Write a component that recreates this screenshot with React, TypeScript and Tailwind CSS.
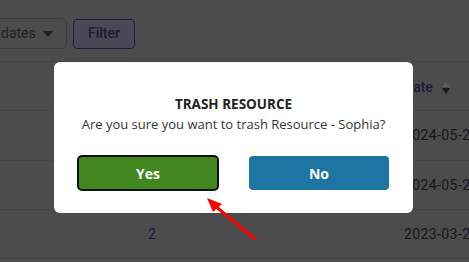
export default function App() {
  const rows = [
    { num: "", date: "2024-05-2", h: "h-[50px]" },
    { num: "", date: "2024-05-2", h: "h-[49px]" },
    { num: "2", date: "2023-03-2", h: "h-[49px]" },
    { num: "", date: "", h: "h-[49px]" },
  ];

  return (
    <div className="relative w-[469px] h-[262px] overflow-hidden bg-[#4c4c4c] font-['Roboto',sans-serif]">
      {/* page behind the overlay */}
      <div className="flex flex-col">
        <div className="flex items-center gap-[6px] pt-[18px] pb-[12px] h-[62px] border-b border-[#444444]">
          <div className="ml-[-40px] w-[107px] h-[31px] rounded-[6px] border border-[#3d3d3d] flex items-center justify-between pl-[40px] pr-[13px] text-[14px] text-[#1f1f1f]">
            <span>dates</span>
            <span className="w-0 h-0 border-l-[5px] border-r-[5px] border-t-[6px] border-l-transparent border-r-transparent border-t-[#1f1f1f]" />
          </div>
          <button className="w-[62px] h-[30px] rounded-[4px] border border-[#1c1940] bg-[#4a4856] text-[14px] font-medium text-[#1c1a33]">
            Filter
          </button>
        </div>
        <div className="relative h-[49px] border-b border-[#444444] text-[14px] font-medium text-[#1e1b3a] whitespace-nowrap">
          <span className="absolute left-[-9px] top-[15px]">s</span>
          <span className="absolute left-[404px] top-[15px] flex items-center gap-[9px]">
            Date
            <span className="flex flex-col gap-[1px]">
              <span className="w-0 h-0 border-l-[4px] border-r-[4px] border-b-[6px] border-l-transparent border-r-transparent border-b-[#5e5e5e]" />
              <span className="w-0 h-0 border-l-[4px] border-r-[4px] border-t-[6px] border-l-transparent border-r-transparent border-t-[#1a1a1a]" />
            </span>
          </span>
        </div>
        {rows.map((r, i) => (
          <div key={i} className={`relative ${r.h} border-b border-[#444444] text-[14px] tracking-[0.4px] text-[#161616] whitespace-nowrap`}>
            <span className="absolute left-[148px] top-[14px] text-[#1c1a33]">{r.num}</span>
            <span className="absolute left-[404px] top-[14px]">{r.date}</span>
          </div>
        ))}
      </div>

      {/* modal */}
      <div className="absolute left-[54px] top-[62px] w-[359px] bg-white rounded-[6px] flex flex-col items-center pt-[32px] pb-[23px] px-[24px] font-['Open_Sans',sans-serif]">
        <div className="text-[13.5px] leading-[20px] font-bold text-[#222222] whitespace-nowrap">TRASH RESOURCE</div>
        <div className="text-[13px] leading-[20px] text-[#333333] whitespace-nowrap">Are you sure you want to trash Resource - Sophia?</div>
        <div className="mt-[22px] flex gap-[31px]">
          <button className="w-[140px] h-[34px] rounded-[4px] bg-[#41861f] text-white text-[14px] font-bold outline-2 outline-[#111111] outline-offset-[-1px]">
            Yes
          </button>
          <button className="w-[140px] h-[34px] rounded-[4px] bg-[#1d75a4] text-white text-[14px] font-bold">
            No
          </button>
        </div>
      </div>

      {/* annotation arrow */}
      <svg className="absolute inset-0 pointer-events-none" width="469" height="262" viewBox="0 0 469 262">
        <line x1="255" y1="239" x2="214" y2="205" stroke="#ff0000" strokeWidth="3" strokeLinecap="round" />
        <polygon points="207,198 222,204 213,212" fill="#ff0000" />
      </svg>
    </div>
  );
}
